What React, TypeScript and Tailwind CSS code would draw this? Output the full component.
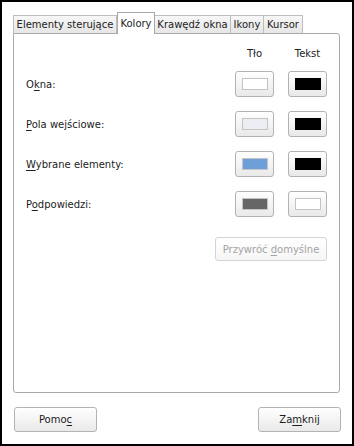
import React from "react";

// ─────────────────────────────────────────────
// Pomocnicze
// ─────────────────────────────────────────────

function U({ children }: { children: React.ReactNode }) {
  return <span className="underline underline-offset-2">{children}</span>;
}

function Btn({
  children,
  className = "",
  disabled,
}: {
  children: React.ReactNode;
  className?: string;
  disabled?: boolean;
}) {
  return (
    <button
      type="button"
      className={
        "flex items-center justify-center rounded-[3px] border bg-linear-to-b " +
        (disabled
          ? "border-[#d4d4d4] from-white to-[#f6f6f6] text-[#a3a3a3] "
          : "border-[#b3b3b3] from-white to-[#e9e9e9] text-[#1c1c1c] ") +
        className
      }
    >
      <span className="whitespace-pre">{children}</span>
    </button>
  );
}

function Swatch({ color, bordered }: { color: string; bordered?: boolean }) {
  return (
    <Btn className="h-[26px] w-[39px]">
      <span
        className={"block h-[12px] w-[26px] " + (bordered ? "border border-[#c4c4c4]" : "")}
        style={{ backgroundColor: color }}
      />
    </Btn>
  );
}

const tabs = [
  { label: "Elementy sterujące", w: "w-[104px]" },
  { label: "Kolory", w: "w-[38px]", active: true },
  { label: "Krawędź okna", w: "w-[76px]" },
  { label: "Ikony", w: "w-[33px]" },
  { label: "Kursor", w: "w-[39px]" },
];

const rows: { label: React.ReactNode; bg: string; bgBorder?: boolean; fg: string; fgBorder?: boolean }[] = [
  { label: <>O<U>k</U>na:</>, bg: "#ffffff", bgBorder: true, fg: "#000000" },
  { label: <><U>P</U>ola wejściowe:</>, bg: "#eceef3", bgBorder: true, fg: "#000000" },
  { label: <><U>W</U>ybrane elementy:</>, bg: "#6f9fd8", bgBorder: true, fg: "#000000" },
  { label: <>P<U>o</U>dpowiedzi:</>, bg: "#666666", bgBorder: true, fg: "#ffffff", fgBorder: true },
];

// ─────────────────────────────────────────────
// Okno
// ─────────────────────────────────────────────

export default function App() {
  return (
    <div
      className="flex h-[446px] w-[354px] flex-col border-2 border-black bg-white pl-[11px] pt-[11px] text-[10px] text-[#222222]"
      style={{ fontFamily: '"DejaVu Sans", sans-serif' }}
    >
      {/* Zakładki */}
      <div className="flex h-[20px] items-end">
        {tabs.map((t, i) =>
          t.active ? (
            <div
              key={t.label}
              className={"relative z-10 -mb-px flex h-[22px] items-center justify-center border border-b-0 border-[#aaaaaa] bg-white pb-[1px] " + t.w}
            >
              {t.label}
            </div>
          ) : (
            <div
              key={t.label}
              className={
                "flex h-[18px] items-center justify-center border-t border-r border-[#bdbdbd] bg-linear-to-b from-[#f7f7f7] to-[#e6e6e6] " +
                (i === 0 ? "border-l " : "") +
                t.w
              }
            >
              {t.label}
            </div>
          )
        )}
      </div>

      {/* Panel */}
      <div className="flex h-[360px] w-[327px] flex-col rounded-b-[3px] rounded-tr-[3px] border border-[#aaaaaa] px-[12px] pt-[12px]">
        <div className="flex h-[14px] items-center justify-end gap-[14px]">
          <div className="w-[39px] text-center">Tło</div>
          <div className="w-[39px] text-center">Tekst</div>
        </div>
        <div className="mt-[11px] flex flex-col gap-[14px]">
          {rows.map((r, i) => (
            <div key={i} className="flex h-[26px] items-center gap-[14px]">
              <div className="flex-1">{r.label}</div>
              <Swatch color={r.bg} bordered={r.bgBorder} />
              <Swatch color={r.fg} bordered={r.fgBorder} />
            </div>
          ))}
        </div>
        <div className="mt-[20px] flex justify-end">
          <Btn disabled className="h-[24px] w-[112px]">
            Przywróć <U>d</U>omyślne
          </Btn>
        </div>
      </div>

      {/* Przyciski */}
      <div className="mt-[14px] flex w-[328px] justify-between pl-px">
        <Btn className="h-[25px] w-[83px]">
          Pomo<U>c</U>
        </Btn>
        <Btn className="h-[25px] w-[83px]">
          Za<U>m</U>knij
        </Btn>
      </div>
    </div>
  );
}
